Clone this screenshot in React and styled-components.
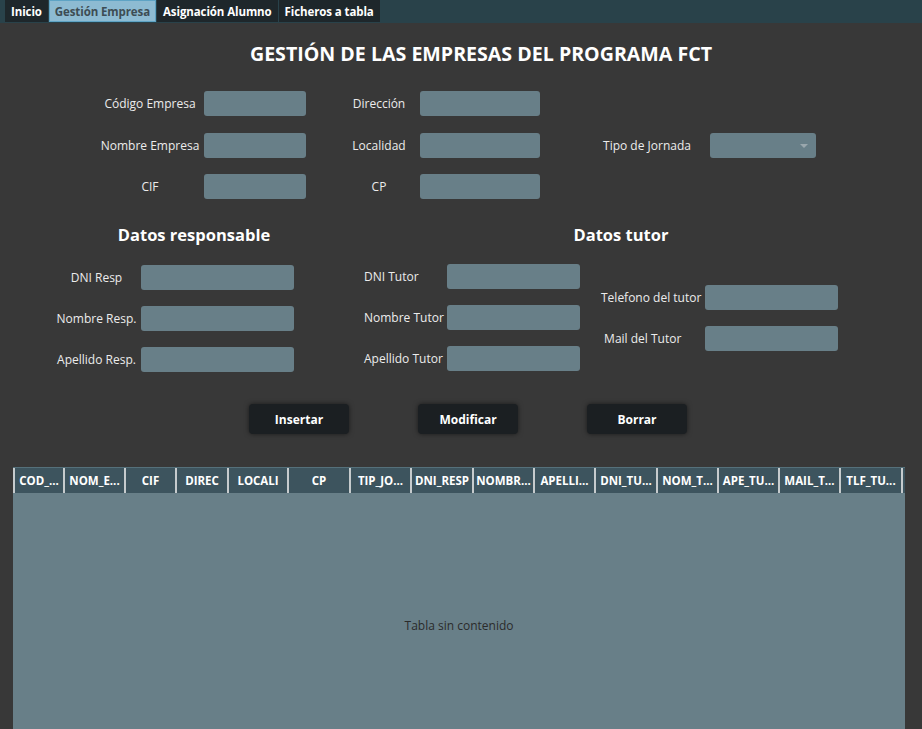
import React from 'react';
import styled, { createGlobalStyle } from 'styled-components';

const GlobalStyle = createGlobalStyle`
  html, body {
    margin: 0;
    padding: 0;
    background: #383838;
    overflow: hidden;
    font-family: 'Open Sans', 'Noto Sans', sans-serif;
  }
`;

const Page = styled.div`
  width: 922px;
  height: 729px;
  overflow: hidden;
  background: #383838;
  color: #ececec;
  display: flex;
  flex-direction: column;
`;

const TabBar = styled.div`
  height: 23px;
  flex-shrink: 0;
  background: #29424a;
  display: flex;
  align-items: stretch;
  padding-left: 5px;
  gap: 1px;
  box-sizing: border-box;
  padding-bottom: 1px;
`;

const Tab = styled.div`
  display: flex;
  align-items: center;
  padding: 0 5px;
  font-size: 11.5px;
  font-weight: 700;
  letter-spacing: -0.1px;
  color: ${(p) => (p.$active ? '#3d4d54' : '#ffffff')};
  background: ${(p) => (p.$active ? '#8dbbd2' : '#1e272b')};
  border: 1px solid ${(p) => (p.$active ? '#5ea3c4' : '#1e272b')};
`;

const Title = styled.h1`
  margin: 17px 0 0;
  height: 26px;
  font-size: 19.6px;
  font-weight: 700;
  text-align: center;
  color: #ffffff;
  padding-left: 40px;
`;

const TopGrid = styled.div`
  margin: 25px 0 0 96px;
  display: grid;
  grid-template-columns: 108px 102px 32px 82px 120px 44px 126px 106px;
  grid-auto-rows: 25px;
  row-gap: 16.5px;
  align-items: center;
`;

const Label = styled.span`
  font-size: 12px;
  color: #ececec;
  text-align: ${(p) => p.$align || 'center'};
  white-space: nowrap;
`;

const Field = styled.div`
  height: 25px;
  background: #687f88;
  border-radius: 3px;
`;

const Combo = styled(Field)`
  position: relative;
  &::after {
    content: '';
    position: absolute;
    right: 8px;
    top: 11px;
    border-left: 4px solid transparent;
    border-right: 4px solid transparent;
    border-top: 4px solid #9aa7ad;
  }
`;

const HeadRow = styled.div`
  margin-top: 25px;
  display: grid;
  grid-template-columns: 388px 466px;
`;

const SectionTitle = styled.h2`
  margin: 0;
  font-size: 16.5px;
  font-weight: 700;
  text-align: center;
  color: #ffffff;
  line-height: 22px;
`;

const People = styled.div`
  margin-top: 18px;
  display: flex;
  align-items: flex-start;
`;

const FieldGroup = styled.div`
  display: grid;
  grid-template-columns: ${(p) => p.$cols};
  grid-auto-rows: 25px;
  row-gap: 16px;
  align-items: center;
  margin-left: ${(p) => p.$left}px;
  margin-top: ${(p) => p.$top || 0}px;
`;

const Buttons = styled.div`
  margin: 32px 0 0 249px;
  display: flex;
  gap: 69px;
`;

const Button = styled.button`
  width: 100px;
  height: 30px;
  border: none;
  border-radius: 4px;
  background: #1b1f22;
  box-shadow: 0 0 5px rgba(0, 0, 0, 0.55);
  color: #ffffff;
  font-family: inherit;
  font-size: 12px;
  font-weight: 700;
`;

const Table = styled.div`
  margin: 33px 0 0 13px;
  width: 892px;
  height: 290px;
  flex-shrink: 0;
  background: #687f88;
  display: flex;
  flex-direction: column;
  border-top: 1px solid #55707a;
  box-sizing: border-box;
`;

const HeaderRow = styled.div`
  height: 25px;
  background: #3d545e;
  display: flex;
  box-sizing: border-box;
`;

const HeadCell = styled.div`
  width: ${(p) => p.$w}px;
  flex-shrink: 0;
  box-sizing: border-box;
  border-left: 2px solid #c6cbcd;
  ${(p) => (p.$last ? 'border-right: 2px solid #c6cbcd;' : '')}
  display: flex;
  align-items: center;
  justify-content: center;
  font-size: 11.5px;
  font-weight: 700;
  color: #ffffff;
  white-space: nowrap;
  overflow: hidden;
`;

const Empty = styled.div`
  flex: 1;
  display: flex;
  align-items: center;
  justify-content: center;
  font-size: 12px;
  color: #2b2b2b;
`;

const columns = [
  ['COD_...', 50], ['NOM_E...', 61], ['CIF', 51], ['DIREC', 52], ['LOCALI', 60],
  ['CP', 62], ['TIP_JO...', 61], ['DNI_RESP', 62], ['NOMBR...', 61], ['APELLI...', 61],
  ['DNI_TU...', 62], ['NOM_T...', 61], ['APE_TU...', 61], ['MAIL_T...', 61], ['TLF_TU...', 64],
];

export default function App() {
  return (
    <Page>
      <GlobalStyle />
      <TabBar>
        <Tab>Inicio</Tab>
        <Tab $active>Gestión Empresa</Tab>
        <Tab>Asignación Alumno</Tab>
        <Tab>Ficheros a tabla</Tab>
      </TabBar>

      <Title>GESTIÓN DE LAS EMPRESAS DEL PROGRAMA FCT</Title>

      <TopGrid>
        <Label>Código Empresa</Label>
        <Field />
        <span />
        <Label>Dirección</Label>
        <Field />
        <span />
        <span />
        <span />

        <Label>Nombre Empresa</Label>
        <Field />
        <span />
        <Label>Localidad</Label>
        <Field />
        <span />
        <Label>Tipo de Jornada</Label>
        <Combo />

        <Label>CIF</Label>
        <Field />
        <span />
        <Label>CP</Label>
        <Field />
      </TopGrid>

      <HeadRow>
        <SectionTitle>Datos responsable</SectionTitle>
        <SectionTitle>Datos tutor</SectionTitle>
      </HeadRow>

      <People>
        <FieldGroup $cols="89px 153px" $left={52} $top={1}>
          <Label>DNI Resp</Label>
          <Field />
          <Label>Nombre Resp.</Label>
          <Field />
          <Label>Apellido Resp.</Label>
          <Field />
        </FieldGroup>
        <FieldGroup $cols="83px 133px" $left={70}>
          <Label $align="left">DNI Tutor</Label>
          <Field />
          <Label $align="left">Nombre Tutor</Label>
          <Field />
          <Label $align="left">Apellido Tutor</Label>
          <Field />
        </FieldGroup>
        <FieldGroup $cols="104px 133px" $left={21} $top={21}>
          <Label $align="left">Telefono del tutor</Label>
          <Field />
          <Label $align="left">&nbsp;Mail del Tutor</Label>
          <Field />
        </FieldGroup>
      </People>

      <Buttons>
        <Button>Insertar</Button>
        <Button>Modificar</Button>
        <Button>Borrar</Button>
      </Buttons>

      <Table>
        <HeaderRow>
          {columns.map(([name, w], i) => (
            <HeadCell key={name} $w={w} $last={i === columns.length - 1}>
              {name}
            </HeadCell>
          ))}
        </HeaderRow>
        <Empty>Tabla sin contenido</Empty>
      </Table>
    </Page>
  );
}
